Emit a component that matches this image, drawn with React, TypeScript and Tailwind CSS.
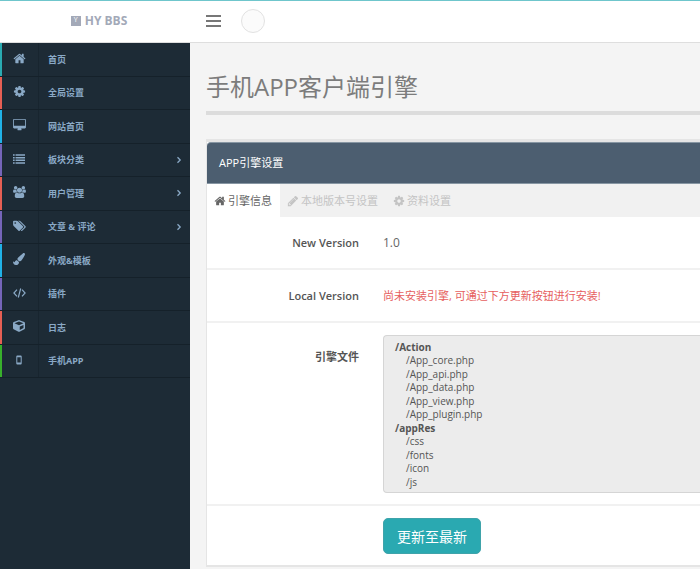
import type { ReactNode } from "react";
import { FaCube, FaPaintBrush } from "react-icons/fa";

const HOME =
  "M1472 992v480q0 26-19 45t-45 19h-384v-384h-256v384h-384q-26 0-45-19t-19-45v-480q0-1 .5-3t.5-3l575-474 575 474q1 2 1 6zm223-69l-62 74q-8 9-21 11h-3q-13 0-21-7l-692-577-692 577q-12 8-24 7-13-2-21-11l-62-74q-8-10-7-23.5t11-21.5l719-599q32-26 76-26t76 26l244 204v-195q0-14 9-23t23-9h192q14 0 23 9t9 23v408l219 182q10 8 11 21.5t-7 23.5z";
const COG =
  "M1152 896q0-106-75-181t-181-75-181 75-75 181 75 181 181 75 181-75 75-181zm512-109v222q0 12-8 23t-20 13l-185 28q-19 54-39 91 35 50 107 138 10 12 10 25t-9 23q-27 37-99 108t-94 71q-12 0-26-9l-138-108q-44 23-91 38-16 136-29 186-7 28-36 28h-222q-14 0-24.5-8.5t-11.5-21.5l-28-184q-49-16-90-37l-141 107q-10 9-25 9-14 0-25-11-126-114-165-168-7-10-7-23 0-12 8-23 15-21 51-66.5t54-70.5q-27-50-41-99l-183-27q-13-2-21-12.5t-8-23.5v-222q0-12 8-23t19-13l186-28q14-46 39-92-40-57-107-138-10-12-10-24 0-10 9-23 26-36 98.5-107.5t94.5-71.5q13 0 26 10l138 107q44-23 91-38 16-136 29-186 7-28 36-28h222q14 0 24.5 8.5t11.5 21.5l28 184q49 16 90 37l142-107q9-9 24-9 13 0 25 10 129 119 165 170 7 8 7 22 0 12-8 23-15 21-51 66.5t-54 70.5q26 50 41 98l183 28q13 2 21 12.5t8 23.5z";
const DESKTOP =
  "M1792 992v-832q0-13-9.5-22.5t-22.5-9.5h-1600q-13 0-22.5 9.5t-9.5 22.5v832q0 13 9.5 22.5t22.5 9.5h1600q13 0 22.5-9.5t9.5-22.5zm128-832v1088q0 66-47 113t-113 47h-544q0 37 16 77.5t32 71 16 43.5q0 26-19 45t-45 19h-512q-26 0-45-19t-19-45q0-14 16-44t32-70 16-78h-544q-66 0-113-47t-47-113v-1088q0-66 47-113t113-47h1600q66 0 113 47t47 113z";
const LIST =
  "M0 200h250v220H0zM380 200h1412v220H380zM0 590h250v220H0zM380 590h1412v220H380zM0 980h250v220H0zM380 980h1412v220H380zM0 1370h250v220H0zM380 1370h1412v220H380z";
const GROUP =
  "M593 896q-162 5-265 128h-134q-82 0-138-40.5t-56-118.5q0-353 124-353 6 0 43.5 21t97.5 42.5 119 21.5q67 0 133-23-5 37-5 66 0 139 81 256zm1071 637q0 120-73 189.5t-194 69.5h-874q-121 0-194-69.5t-73-189.5q0-53 3.5-103.5t14-109 26.5-108.5 43-97.5 62-81 85.5-53.5 111.5-20q10 0 43 21.5t73 48 107 48 135 21.5 135-21.5 107-48 73-48 43-21.5q61 0 111.5 20t85.5 53.5 62 81 43 97.5 26.5 108.5 14 109 3.5 103.5zm-1024-1277q0 106-75 181t-181 75-181-75-75-181 75-181 181-75 181 75 75 181zm704 384q0 159-112.5 271.5t-271.5 112.5-271.5-112.5-112.5-271.5 112.5-271.5 271.5-112.5 271.5 112.5 112.5 271.5zm576 225q0 78-56 118.5t-138 40.5h-134q-103-123-265-128 81-117 81-256 0-29-5-66 66 23 133 23 59 0 119-21.5t97.5-42.5 43.5-21q124 0 124 353zm-128-609q0 106-75 181t-181 75-181-75-75-181 75-181 181-75 181 75 75 181z";
const TAGS =
  "M448 448q0-53-37.5-90.5t-90.5-37.5-90.5 37.5-37.5 90.5 37.5 90.5 90.5 37.5 90.5-37.5 37.5-90.5zm1067 576q0 53-37 90l-491 492q-39 37-91 37-53 0-90-37l-715-716q-38-37-64.5-101t-26.5-117v-416q0-52 38-90t90-38h416q53 0 117 26.5t102 64.5l715 714q37 39 37 91zm384 0q0 53-37 90l-491 492q-39 37-91 37-36 0-59-14t-53-45l470-470q37-37 37-90 0-52-37-91l-715-714q-38-38-102-64.5t-117-26.5h224q53 0 117 26.5t102 64.5l715 714q37 39 37 91z";
const PENCIL =
  "M491 1536l91-91-235-235-91 91v107h128v128h107zm523-928q0-22-22-22-10 0-17 7l-542 542q-7 7-7 17 0 22 22 22 10 0 17-7l542-542q7-7 7-17zm-54-192l416 416-832 832h-416v-416zm683 96q0 53-37 90l-166 166-416-416 166-165q36-38 90-38 53 0 91 38l235 234q37 39 37 91z";

function Glyph({ d, wide, className }: { d: string; wide?: boolean; className: string }) {
  return (
    <svg viewBox={wide ? "0 0 1920 1792" : "0 0 1792 1792"} className={className} fill="currentColor" aria-hidden="true">
      <path d={d} />
    </svg>
  );
}

type Item = { label: string; bar: string; icon: ReactNode; sub?: boolean };

const items: Item[] = [
  { label: "首页", bar: "bg-[#2aabb2]", icon: <Glyph d={HOME} className="size-[13px]" /> },
  { label: "全局设置", bar: "bg-[#e65f54]", icon: <Glyph d={COG} className="size-[13px]" /> },
  { label: "网站首页", bar: "bg-[#20b2e8]", icon: <Glyph d={DESKTOP} wide className="h-3 w-[13px]" /> },
  { label: "板块分类", bar: "bg-[#7565b9]", icon: <Glyph d={LIST} className="size-3" />, sub: true },
  { label: "用户管理", bar: "bg-[#e65f54]", icon: <Glyph d={GROUP} wide className="h-3 w-[13px]" />, sub: true },
  { label: "文章 & 评论", bar: "bg-[#7565b9]", icon: <Glyph d={TAGS} wide className="h-3 w-[13px]" />, sub: true },
  { label: "外观&模板", bar: "bg-[#20b2e8]", icon: <FaPaintBrush className="size-3" /> },
  {
    label: "插件",
    bar: "bg-[#7565b9]",
    icon: (
      <svg viewBox="0 0 13 12" className="h-3 w-[13px]" fill="none" stroke="currentColor" strokeWidth="1.2" aria-hidden="true">
        <path d="M4 2.6.9 6 4 9.400M9 2.600 12.100 6 9 9.400M7.700 1.500 5.300 10.500" />
      </svg>
    ),
  },
  { label: "日志", bar: "bg-[#e65f54]", icon: <FaCube className="size-3" /> },
  {
    label: "手机APP",
    bar: "bg-[#38b02c]",
    icon: (
      <svg viewBox="0 0 12 12" className="size-3" aria-hidden="true">
        <path
          fill="currentColor"
          fillRule="evenodd"
          d="M4.300 1.500h3.400q1 0 1 1v7q0 1-1 1H4.300q-1 0-1-1v-7q0-1 1-1zM4.300 3.200v5.300h3.400V3.200z"
        />
      </svg>
    ),
  },
];

const files = [
  { dir: "/Action", names: ["/App_core.php", "/App_api.php", "/App_data.php", "/App_view.php", "/App_plugin.php"] },
  { dir: "/appRes", names: ["/css", "/fonts", "/icon", "/js"] },
];

const tabs = [
  { label: "引擎信息", icon: HOME },
  { label: "本地版本号设置", icon: PENCIL },
  { label: "资料设置", icon: COG },
];

function Row({ label, tall, children }: { label?: string; tall?: boolean; children: ReactNode }) {
  return (
    <div className="flex gap-6 border-b-2 border-[#f1f1f1] pt-3 pb-[11px] last:border-b-0">
      <div className={`w-[152px] shrink-0 text-right text-[11px] leading-7 font-semibold text-[#555] ${tall ? "pt-2" : ""}`}>
        {label}
      </div>
      <div className="min-w-0 flex-1">{children}</div>
    </div>
  );
}

export default function App() {
  return (
    <div className="flex min-h-screen flex-col overflow-hidden bg-[#f4f4f4] font-['Open_Sans','Noto_Sans_CJK_SC',sans-serif] text-[#666]">
      <header className="flex h-[43px] shrink-0 items-center border-t border-b border-t-[#6fc6cc] border-b-[#dedede] bg-white pb-[2px]">
        <a href="#" className="flex w-[190px] shrink-0 items-center justify-center gap-1 pl-2 text-[12px] font-bold text-[#a3a9b8]">
          <span className="flex size-[10px] items-center justify-center bg-[#a3a9b8] text-[7px] font-normal text-white">Y</span>
          HY BBS
        </a>
        <button type="button" aria-label="菜单" className="ml-4 flex w-[15px] flex-col gap-[3px]">
          <span className="h-[2px] w-full bg-[#777]" />
          <span className="h-[2px] w-full bg-[#777]" />
          <span className="h-[2px] w-full bg-[#777]" />
        </button>
        <button type="button" aria-label="用户" className="ml-5 size-6 rounded-full border border-[#e2e2e2] bg-[#fbfbfb]" />
      </header>

      <div className="flex flex-1">
        <aside className="w-[190px] shrink-0 bg-[#1d2b36]">
          <nav className="grid h-[335px] auto-rows-fr">
            {items.map((item) => (
              <a key={item.label} href="#" className="flex border-b border-[#15212a] text-[#8aa9c6]">
                <span className={`w-[2px] ${item.bar}`} />
                <span className="flex w-[37px] items-center justify-center border-r border-[#18252f] pr-[2px] pb-[2px]">{item.icon}</span>
                <span className="flex flex-1 items-center pl-[9px] text-[9px] font-bold">{item.label}</span>
                {item.sub && (
                  <svg viewBox="0 0 6 8" className="mr-2 h-2 w-[6px] self-center" fill="none" stroke="currentColor" strokeWidth="1.300" aria-hidden="true">
                    <path d="M1.500 1.300 4.200 4 1.500 6.700" />
                  </svg>
                )}
              </a>
            ))}
          </nav>
        </aside>

        <main className="min-w-0 flex-1 pl-4">
          <h1 className="mt-6 border-b-4 border-[#dcdcdc] pb-1 text-[24px] leading-10 font-normal text-[#7c7c7c]">手机APP客户端引擎</h1>

          <section className="mt-6 border-t-[3px] border-b-2 border-l border-[#e5e5e5] bg-white">
            <h2 className="rounded-tl-sm border-y border-[#8796a3] bg-[#4c5e70] px-3 text-[11px] leading-10 text-white">APP引擎设置</h2>
            <div role="tablist" className="flex bg-[#f1f1f1] text-[11px] leading-[33px]">
              {tabs.map((tab, i) => (
                <button
                  key={tab.label}
                  type="button"
                  role="tab"
                  aria-selected={i === 0}
                  className={`flex items-center gap-[2px] pr-2 pl-[7px] ${i === 0 ? "bg-white text-[#666]" : "text-[#c4c4c4]"}`}
                >
                  <Glyph d={tab.icon} className="size-3" />
                  {tab.label}
                </button>
              ))}
            </div>

            <Row label="New Version">
              <p className="text-[12px] leading-7">1.0</p>
            </Row>
            <Row label="Local Version">
              <p className="text-[11px] leading-7 text-[#e66060]">尚未安装引擎, 可通过下方更新按钮进行安装!</p>
            </Row>
            <Row label="引擎文件" tall>
              <div className="grid h-[158px] auto-rows-fr rounded-l border border-r-0 border-[#d5d5d5] bg-[#ececec] px-[11px] pt-[5px] pb-[3px] text-[10px] leading-[13px] text-[#555]">
                {files.flatMap((group) => [
                  <b key={group.dir}>{group.dir}</b>,
                  ...group.names.map((name) => (
                    <span key={name} className="pl-[11px]">
                      {name}
                    </span>
                  )),
                ])}
              </div>
            </Row>
            <Row>
              <button type="button" className="h-9 rounded-[5px] border border-[#3fa3aa] bg-[#2aa9b1] px-[13px] text-[14px] text-white">
                更新至最新
              </button>
            </Row>
          </section>
        </main>
      </div>
    </div>
  );
}
